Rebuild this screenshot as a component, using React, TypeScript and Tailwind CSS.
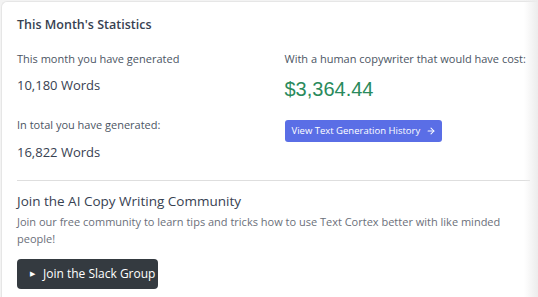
import { ArrowRight } from "lucide-react";

const font = { fontFamily: '"Open Sans", "Liberation Sans", sans-serif' };

const StatLabel = ({ children }: { children: React.ReactNode }) => (
  <p className="whitespace-nowrap text-[11px] leading-[16px] text-[#4b5563]">{children}</p>
);

const StatValue = ({ children }: { children: React.ReactNode }) => (
  <p className="text-[13px] leading-[20px] font-medium text-[#374151]">{children}</p>
);

export default function App() {
  return (
    <div className="relative h-[297px] w-[538px] overflow-hidden bg-[#f3f3f3]" style={font}>
      <div className="ml-[1px] mt-[1px] w-[560px] rounded-tl-md border-l border-t border-[#e6e6e6] bg-white pl-[15px] pr-[30px]">
        <h2 className="pt-[15px] text-[12.5px] font-semibold leading-[16px] text-[#374151]">
          This Month's Statistics
        </h2>

        <div className="mt-[18px] grid w-[513px] grid-cols-2 gap-x-[22px]">
          <div>
            <StatLabel>This month you have generated</StatLabel>
            <div className="mt-[8px]">
              <StatValue>10,180 Words</StatValue>
            </div>
            <div className="mt-[22px]">
              <StatLabel>In total you have generated:</StatLabel>
            </div>
            <div className="mt-[9px]">
              <StatValue>16,822 Words</StatValue>
            </div>
          </div>

          <div>
            <StatLabel>With a human copywriter that would have cost:</StatLabel>
            <p
              className="mt-[10px] text-[20px] leading-[24px] text-[#2a8a5c]"
              style={{ fontFamily: '"Liberation Sans", Arial, sans-serif' }}
            >
              $3,364.44
            </p>
            <button className="mt-[19px] flex h-[22px] items-center gap-[6px] rounded-[3px] bg-[#5a6ee6] pl-[7px] pr-[6px] text-[9.5px] font-medium text-white">
              View Text Generation History
              <ArrowRight size={10} strokeWidth={2.5} />
            </button>
          </div>
        </div>

        <hr className="mt-[18px] w-[513px] border-[#dedede]" />

        <h3 className="mt-[10px] text-[13.5px] leading-[20px] text-[#374151]">
          Join the AI Copy Writing Community
        </h3>
        <p className="mt-[2px] w-[513px] text-[11px] leading-[17px] text-[#6b6f7a]">
          Join our free community to learn tips and tricks how to use Text Cortex better with like minded people!
        </p>

        <button className="mt-[12px] flex h-[30px] w-[141px] items-center gap-[8px] whitespace-nowrap rounded-[4px] bg-[#343a40] pl-[13px] text-[12px] font-medium text-white">
          <span className="text-[7px]">▶</span>
          Join the Slack Group
        </button>
        <div className="h-[20px]" />
      </div>

      <div className="pointer-events-none absolute right-0 top-0 h-full w-[14px] bg-gradient-to-r from-transparent to-[#ececec]" />
    </div>
  );
}
